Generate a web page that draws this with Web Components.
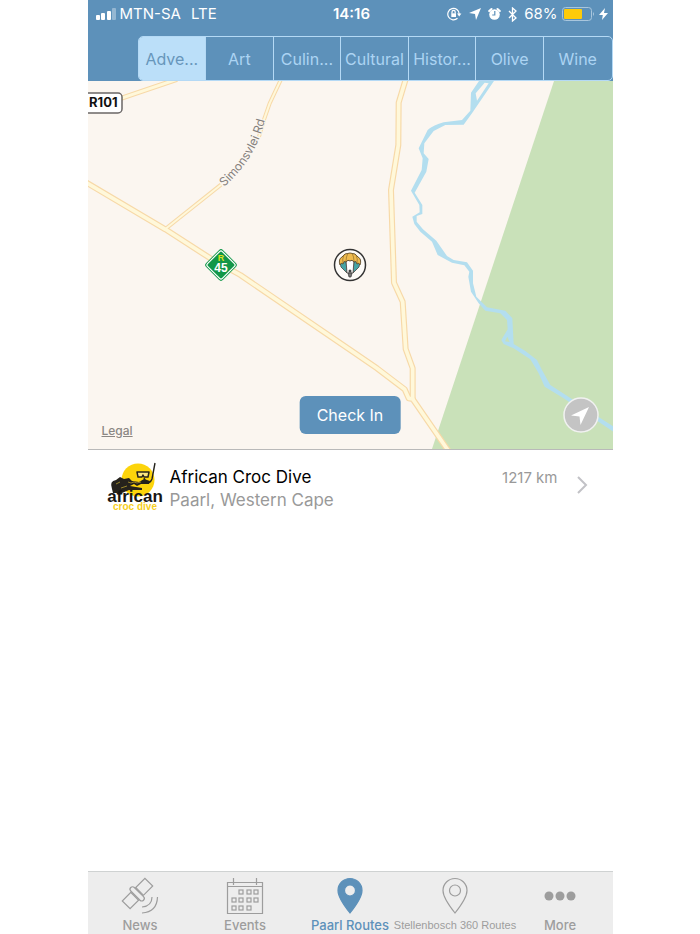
<!DOCTYPE html>
<html lang="en">
<head>
<meta charset="utf-8">
<meta name="viewport" content="width=device-width, initial-scale=1">
<title>Paarl Routes</title>
<style>
	body {
		margin: 0;
		background: #fff;
		font-family: Inter, "Liberation Sans", sans-serif;
	}
</style>
</head>
<body>
<phone-screen>
	<status-bar slot="header" carrier="MTN-SA" network="LTE" time="14:16" battery="68%"></status-bar>
	<category-bar slot="header">
		<category-item selected>Adve...</category-item>
		<category-item>Art</category-item>
		<category-item>Culin...</category-item>
		<category-item>Cultural</category-item>
		<category-item>Histor...</category-item>
		<category-item>Olive</category-item>
		<category-item>Wine</category-item>
	</category-bar>
	<route-map></route-map>
	<place-row>
		<croc-logo slot="logo"></croc-logo>
		<span slot="name">African Croc Dive</span>
		<span slot="area">Paarl, Western Cape</span>
		<span slot="distance">1217 km</span>
	</place-row>
	<tab-bar slot="footer">
		<tab-item icon="satellite">News</tab-item>
		<tab-item icon="calendar">Events</tab-item>
		<tab-item icon="pin" selected>Paarl Routes</tab-item>
		<tab-item icon="pin" long>Stellenbosch 360 Routes</tab-item>
		<tab-item icon="more">More</tab-item>
	</tab-bar>
</phone-screen>

<script>
const html = (strings, ...expressions) => {
	const template = document.createElement('template');
	template.innerHTML = strings.reduce(
		(result, string, index) => result + string + (expressions[index] ?? ''), ''
	);
	return template;
};

class BaseElement extends HTMLElement {
	constructor() {
		super();
		this.attachShadow({mode: 'open'}).appendChild(
			this.constructor.template.content.cloneNode(true)
		);
	}
}

/**
 * PhoneScreen
 */

class PhoneScreen extends BaseElement {
	static template = html`
		<style>
			:host {
				display: flex;
				flex-direction: column;
				width: 75%;
				min-height: 100vh;
				margin: 0 auto;
				background: #fff;
			}
			header {
				background: #5d91ba;
			}
			main {
				flex: 1;
			}
		</style>
		<header><slot name="header"></slot></header>
		<main><slot></slot></main>
		<footer><slot name="footer"></slot></footer>
	`;
}

customElements.define('phone-screen', PhoneScreen);

/**
 * StatusBar
 */

class StatusBar extends BaseElement {
	static template = html`
		<style>
			:host {
				display: grid;
				grid-template-columns: 1fr auto 1fr;
				align-items: center;
				height: 28px;
				padding: 0 5px 0 8px;
				color: #fff;
				font-size: 15px;
				line-height: 20px;
				white-space: nowrap;
			}
			div {
				display: flex;
				align-items: center;
			}
			.left {
				gap: 4px;
			}
			.network {
				margin-left: 6px;
			}
			.time {
				font-weight: 600;
			}
			.right {
				justify-content: flex-end;
				gap: 4px;
			}
			svg {
				display: block;
				flex: none;
			}
			.status {
				gap: 7px;
				margin-right: 3px;
			}
		</style>
		<div class="left">
			<svg width="20" height="12" fill="#fff">
				<rect y="7" width="4" height="5" rx="1"/>
				<rect x="5" y="5" width="4" height="7" rx="1"/>
				<rect x="11" y="3" width="4" height="9" rx="1"/>
				<rect x="16" width="4" height="12" rx="1" opacity=".35"/>
			</svg>
			<span class="carrier"></span>
			<span class="network"></span>
		</div>
		<span class="time"></span>
		<div class="right">
			<div class="status">
				<svg width="15" height="14" viewBox="0 0 15 14" fill="none" stroke="#fff" stroke-width="1.2">
					<path d="M10.500 11.200A5.700 5.700 0 1 1 12.200 7"/>
					<path d="M10 6.500h4.400l-2.200 3z" fill="#fff" stroke="none"/>
					<path d="M5 6.500V5a1.600 1.600 0 0 1 3.200 0v1.500"/>
					<rect x="4.300" y="6.300" width="4.700" height="3.700" fill="#fff" stroke="none"/>
				</svg>
				<svg width="12" height="12" viewBox="0 0 12 12" fill="#fff"><path d="M12 0 7 12 6 6 0 5z"/></svg>
				<svg width="13" height="14" viewBox="0 0 13 14">
					<circle cx="6.500" cy="7.500" r="5.300" fill="#fff"/>
					<path d="M1.200 4 3.500 2M11.800 4 9.500 2" stroke="#fff" stroke-width="2" stroke-linecap="round"/>
					<path d="M6.800 4v4H4.200" fill="none" stroke="#5d91ba" stroke-width="1.2"/>
				</svg>
				<svg width="9" height="15" viewBox="0 0 9 15" fill="none" stroke="#fff" stroke-width="1.3"><path d="m1 4 7 7-3.500 3V1L8 4l-7 7"/></svg>
			</div>
			<span class="battery"></span>
			<svg width="33" height="14" viewBox="0 0 33 14">
				<rect x=".5" y=".5" width="29" height="13" rx="3" fill="none" stroke="#a9c6dd"/>
				<rect x="2" y="2" width="18" height="10" rx="1" fill="#fecb09"/>
				<path d="M31 5v4q2-2 0-4" fill="#a9c6dd"/>
			</svg>
			<svg width="9" height="12" viewBox="0 0 9 12" fill="#fff"><path d="M6 0 0 7h3.800L3 12l6-7H5z"/></svg>
		</div>
	`;

	static get observedAttributes() { return ['carrier', 'network', 'time', 'battery'] }

	attributeChangedCallback(name, _oldValue, newValue) {
		this.shadowRoot.querySelector(`.${name}`).textContent = newValue;
	}
}

customElements.define('status-bar', StatusBar);

/**
 * CategoryBar
 */

class CategoryBar extends BaseElement {
	static template = html`
		<style>
			:host {
				display: block;
				padding: 8px 0 0 50px;
			}
			nav {
				display: grid;
				grid-template-columns: repeat(7, 1fr);
				height: 45px;
				box-sizing: border-box;
				border: 1px solid #b4d9f5;
				border-radius: 5px;
				overflow: hidden;
			}
		</style>
		<nav><slot></slot></nav>
	`;
}

customElements.define('category-bar', CategoryBar);

class CategoryItem extends BaseElement {
	static template = html`
		<style>
			:host {
				display: grid;
				min-width: 0;
				border-right: 1px solid #b4d9f5;
			}
			:host(:last-child) {
				border-right: 0;
			}
			button {
				min-width: 0;
				padding: 0;
				border: 0;
				background: none;
				color: #acd4f3;
				font: 16px/24px Inter, "Liberation Sans", sans-serif;
				white-space: nowrap;
			}
			:host([selected]) button {
				background: #bbdff9;
				color: #6796bb;
			}
		</style>
		<button type="button"><slot></slot></button>
	`;
}

customElements.define('category-item', CategoryItem);

/**
 * RouteMap
 */

class RouteMap extends BaseElement {
	static template = html`
		<style>
			:host {
				display: block;
				position: relative;
				border-bottom: 1px solid #b9b9b9;
				background: #fbf6f0;
			}
			.map {
				display: block;
				width: 100%;
				aspect-ratio: 525 / 368;
			}
			.edge {
				fill: none;
				stroke: #f7d9a8;
				stroke-linejoin: round;
			}
			.road {
				fill: none;
				stroke: #fff8da;
				stroke-linejoin: round;
			}
			text {
				font-family: Inter, "Liberation Sans", sans-serif;
			}
			.shield {
				font-family: "Liberation Sans", sans-serif;
				font-weight: 700;
			}
			.check-in {
				position: absolute;
				bottom: 15px;
				left: 50%;
				transform: translateX(-50%);
				padding: 7px 17px;
				border: 0;
				border-radius: 6px;
				background: #5d91ba;
				color: #fff;
				font: 16px/24px Inter, "Liberation Sans", sans-serif;
				white-space: nowrap;
			}
			.locate {
				position: absolute;
				right: 14px;
				bottom: 16px;
				padding: 0;
				border: 0;
				background: none;
			}
			.locate svg {
				display: block;
			}
			a {
				position: absolute;
				left: 14px;
				bottom: 10px;
				color: #8b8783;
				font-size: 12px;
				font-weight: 500;
				line-height: 16px;
			}
		</style>
		<svg class="map" viewBox="0 0 525 368" preserveAspectRatio="xMidYMid slice">
			<g transform="scale(.33333) translate(-23 -3)">
				<path fill="#c9e1b9" d="M1422 0 1054 1110H1610V0z"/>
				<path fill="#b3deef" fill-rule="evenodd" d="M1198 0 1172 38 1170 92 1145 120 1090 127Q1060 135 1042 150L1015 205 1027 235 1024 270 992 332 1017 375 1018 397 996 410 1002 432 1020 455 1055 485 1072 525 1115 548 1152 556 1167 575 1164 590 1172 635 1195 670 1215 692 1260 700 1280 720 1282 748 1263 780 1270 792 1300 805 1350 838 1375 880 1393 920 1450 955 1600 1056V1040L1550 1008 1470 954 1410 915 1385 870 1370 840 1335 813 1300 792 1296 715 1275 692 1220 682 1188 650 1178 610 1178 572 1160 547 1120 540 1100 528 1068 482 1028 448 1009 425 1009 408 1026 402 1026 375 1003 338 1038 275 1045 237 1030 220 1032 190 1060 153 1095 135 1150 134 1176 98 1243 0zM1213 8 1225 10 1190 62 1186 40zM1281 770 1288 786 1274 784z"/>
				<path class="edge" stroke-width="15" d="M60 76 290 -2"/>
				<path class="road" stroke-width="9" d="M60 76 290 -2"/>
				<path class="edge" stroke-width="12" d="M602 -2 568 70 550 122 536 170"/>
				<path class="road" stroke-width="6" d="M602 -2 568 70 550 122 536 170"/>
				<path class="edge" stroke-width="12" d="M422 314 255 447"/>
				<path class="edge" stroke-width="18" d="M10 303 255 448 390 535 480 585 810 810 890 865 973 928 985 955 997 957 1108 1118"/>
				<path class="edge" stroke-width="18" d="M976 -2 955 68 954 195 932 330 941 608 967 665 976 807 997 865V957"/>
				<path class="road" stroke-width="11" d="M10 303 255 448 390 535 480 585 810 810 890 865 973 928 985 955 997 957 1108 1118"/>
				<path class="road" stroke-width="11" d="M976 -2 955 68 954 195 932 330 941 608 967 665 976 807 997 865V957"/>
				<path class="road" stroke-width="6" d="M422 314 255 447"/>
			</g>
			<path id="label" fill="none" d="M136 106Q170 76 178 34"/>
			<text font-size="12" fill="#85817d" stroke="#fbf6f0" stroke-width="2" paint-order="stroke"><textPath href="#label">Simonsvlei Rd</textPath></text>

			<rect x="-4" y="12" width="38" height="20" rx="4" fill="#fff" stroke="#6b6766" stroke-width="1.5"/>
			<text x="1" y="26" font-size="13" font-weight="700" fill="#111">R101</text>

			<g transform="translate(133 184)">
				<rect x="-12" y="-12" width="24" height="24" rx="3" transform="rotate(45)" fill="#119748"/>
				<rect x="-10.500" y="-10.500" width="21" height="21" rx="2" transform="rotate(45)" fill="none" stroke="#fff" stroke-width="1.2"/>
				<text class="shield" y="-4" font-size="9" fill="#d8e021" text-anchor="middle">R</text>
				<text class="shield" y="7" font-size="12" fill="#fff" text-anchor="middle">45</text>
			</g>

			<g transform="translate(262 184)">
				<circle r="15.500" fill="#fdfbf8" stroke="#333" stroke-width="1.5"/>
				<path d="M-10-3-9 2-3 8-4-5zM10-3 9 2 3 8 4-5z" fill="#46a5a5" stroke="#494440" stroke-width=".8"/>
				<path d="M-4-5-3 8H3L4-5z" fill="#fff" stroke="#494440" stroke-width=".8"/>
				<path d="M-10 0Q-12-6-8-8-6-12 0-12T8-8Q12-6 10 0 9-3 7-1 6-5 4-3 2-6 0-4-2-6-4-3-6-5-7-1-9-3-10 0z" fill="#efbb4e" stroke="#5b4a2d" stroke-width=".9"/>
				<path d="M-6-10Q-8-6-7-2M-2-12Q-4-8-4-4M2-12Q4-8 4-4M6-10Q8-6 7-2" fill="none" stroke="#8f6e2c" stroke-width=".7"/>
				<circle cy="6" r="1.500" fill="#444"/>
				<path d="M-2 8H2L1 12H-1z" fill="#777" stroke="#333" stroke-width=".7"/>
			</g>
		</svg>
		<a href="#legal">Legal</a>
		<button class="check-in" type="button">Check In</button>
		<button class="locate" type="button" aria-label="Show my location">
			<svg width="36" height="36" viewBox="0 0 36 36">
				<circle cx="18" cy="18" r="17" fill="#c4c4c4" stroke="#f1f1f1" stroke-width="1.5"/>
				<path d="M26 10 17.500 28 16.500 19.500 8 18.500z" fill="#fff"/>
			</svg>
		</button>
	`;
}

customElements.define('route-map', RouteMap);

/**
 * CrocLogo
 */

class CrocLogo extends BaseElement {
	static template = html`
		<style>
			:host, svg {
				display: block;
			}
			svg {
				overflow: visible;
			}
			text {
				font-family: "Liberation Sans", sans-serif;
				font-weight: 700;
				text-anchor: middle;
			}
		</style>
		<svg width="56" height="50" viewBox="0 0 56 50">
			<circle cx="31" cy="18" r="16.500" fill="#fcd40b"/>
			<path d="M5 27Q2 19 9 18L13 15 17 17 22 16 25 19 32 20 37 17 43 19 42 22 34 22 30 24 27 22 23 24 35 26V28L22 28 15 31 6 31z" fill="#25221c"/>
			<path d="m9 22 4-2M14 26l6-2M21 20l3 1 3-1 3 1 4-1" fill="none" stroke="#b29a2d" stroke-width=".8"/>
			<path d="M30 10H42L41 15H37L36 13 35 15H31z" fill="#fce681" stroke="#25221c" stroke-width="1.5" stroke-linejoin="round"/>
			<path d="M48 1 45 17Q43 22 39 20L37 16" fill="none" stroke="#25221c" stroke-width="1.4"/>
			<text x="28" y="40" font-size="17" fill="#171513">african</text>
			<text x="28" y="48" font-size="10" fill="#f7cf22">croc dive</text>
		</svg>
	`;
}

customElements.define('croc-logo', CrocLogo);

/**
 * PlaceRow
 */

class PlaceRow extends BaseElement {
	static template = html`
		<style>
			:host {
				display: flex;
				gap: 7px;
				padding: 12px 25px 12px 19px;
			}
			.text {
				flex: 1;
				padding-top: 4px;
				font-size: 17px;
				line-height: 23px;
				color: #000;
			}
			.text div + div {
				color: #999;
			}
			.distance {
				padding-top: 4px;
				color: #999;
				font-size: 15px;
				line-height: 23px;
			}
			svg {
				margin: 14px 0 0 12px;
			}
		</style>
		<slot name="logo"></slot>
		<div class="text">
			<div><slot name="name"></slot></div>
			<div><slot name="area"></slot></div>
		</div>
		<div class="distance"><slot name="distance"></slot></div>
		<svg width="11" height="18" viewBox="0 0 11 18" fill="none" stroke="#c2c2c6" stroke-width="2"><path d="m1 1 8 8-8 8"/></svg>
	`;
}

customElements.define('place-row', PlaceRow);

/**
 * TabBar
 */

class TabBar extends BaseElement {
	static template = html`
		<style>
			:host {
				display: block;
				border-top: 1px solid #cfd2d2;
				background: #ededed;
			}
			nav {
				display: grid;
				grid-template-columns: repeat(5, minmax(0, 1fr));
				height: 62px;
			}
		</style>
		<nav><slot></slot></nav>
	`;
}

customElements.define('tab-bar', TabBar);

const square = (x, y) => `<rect x="${x}" y="${y}" width="4" height="4"/>`;

const tabIcons = {
	satellite: `
		<g transform="translate(15.500 15.500) rotate(-45)">
			<rect x="-16" y="-5.500" width="12" height="11"/>
			<rect x="3" y="-5.500" width="13" height="11"/>
			<rect x="-3" y="-9" width="5" height="18" rx="2.500"/>
		</g>
		<path d="M30 19Q30 28 20 29M35.500 19Q35 34 20 35"/>
	`,
	calendar: `
		<path d="M.5 4.500h35v31H.5zM.5 8.500h35M6.500 0v7M29.500 0v7"/>
		${[12, 20, 27].map((x) => square(x, 12)).join('')}
		${[5, 12, 20, 27].map((x) => square(x, 20)).join('')}
		${[5, 12, 20].map((x) => square(x, 28)).join('')}
	`,
	pin: '<path fill-rule="evenodd" d="M18 35Q6 20 6 12.500A12 12 0 0 1 30 12.500Q30 20 18 35zM18 7A5.500 5.500 0 1 0 18 18 5.500 5.500 0 1 0 18 7z"/>',
	more: '<g fill="currentColor" stroke="none"><circle cx="7" cy="18" r="4.500"/><circle cx="18" cy="18" r="4.500"/><circle cx="29" cy="18" r="4.500"/></g>',
};

class TabItem extends BaseElement {
	static template = html`
		<style>
			:host {
				display: grid;
				color: #9d9d9d;
			}
			:host([selected]) {
				color: #5d91ba;
			}
			button {
				display: flex;
				flex-direction: column;
				align-items: center;
				gap: 3px;
				min-width: 0;
				padding: 6px 0 0;
				border: 0;
				background: none;
				color: inherit;
				font: 500 13px/16px Inter, "Liberation Sans", sans-serif;
				white-space: nowrap;
			}
			:host([long]) button {
				font: 11px/16px "Liberation Sans", sans-serif;
			}
			svg {
				flex: none;
				fill: none;
				stroke: currentColor;
				stroke-width: 1.2;
				overflow: visible;
			}
			:host([selected]) svg {
				fill: currentColor;
			}
		</style>
		<button type="button">
			<svg width="36" height="36" viewBox="0 0 36 36"></svg>
			<span><slot></slot></span>
		</button>
	`;

	static get observedAttributes() { return ['icon'] }

	attributeChangedCallback(_name, _oldValue, newValue) {
		this.shadowRoot.querySelector('svg').innerHTML = tabIcons[newValue] ?? '';
	}
}

customElements.define('tab-item', TabItem);
</script>
</body>
</html>
